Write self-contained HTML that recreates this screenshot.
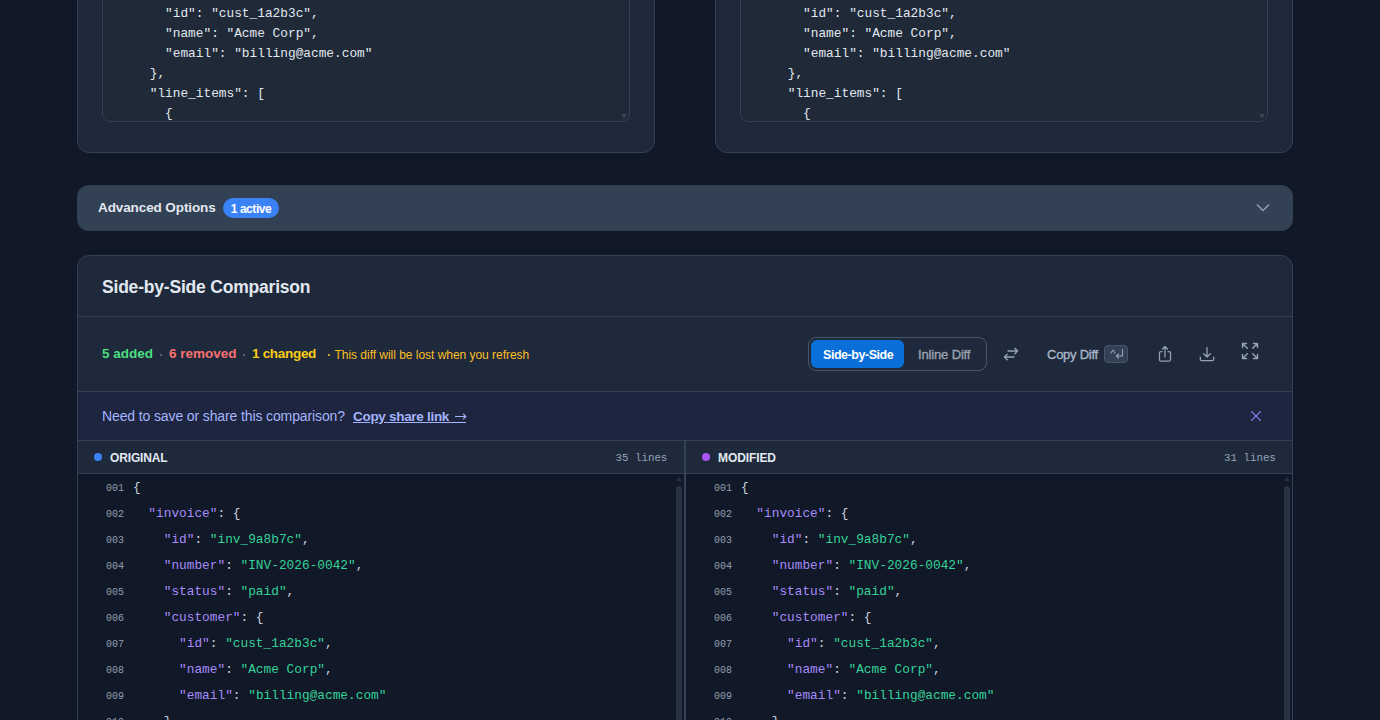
<!DOCTYPE html>
<html><head><meta charset="utf-8">
<style>
*{box-sizing:border-box;margin:0;padding:0}
html,body{width:1380px;height:720px;overflow:hidden;background:#111827;font-family:"Liberation Sans",sans-serif;color:#e2e8f0}
.abs{position:absolute;white-space:nowrap}
.mono{font-family:"Liberation Mono",monospace}
.card{position:absolute;background:#1e293b;border:1px solid #334155;border-radius:12px}
.ta{position:absolute;background:#1f2937;border:1px solid #334155;border-radius:8px;overflow:hidden}
.ta pre{position:absolute;left:16px;font-family:"Liberation Mono",monospace;font-size:12.8px;line-height:20px;color:#e2e8f0;white-space:pre}
.tri-down{position:absolute;width:0;height:0;border-left:3.5px solid transparent;border-right:3.5px solid transparent;border-top:5px solid #374252}
.row{position:absolute;height:26px;width:580px;white-space:pre;font-family:"Liberation Mono",monospace}
.ln{position:absolute;left:0;top:1.5px;font-size:10px;line-height:26px;color:#939fb1}
.cd{position:absolute;left:27px;top:0;font-size:12.8px;line-height:26px;color:#cbd5e1}
.k{color:#a78bfa}.s{color:#34d399}.p{color:#cbd5e1}
.sep{position:absolute;width:2px;height:2px;background:#64748b;border-radius:1px}
</style></head>
<body>
<div class="card" style="left:77px;top:-200px;width:578px;height:353px"></div>
<div class="card" style="left:715px;top:-200px;width:578px;height:353px"></div>
<div class="ta" style="left:102px;top:-180px;width:528px;height:302px">
<pre style="top:182.5px">      "id": "cust_1a2b3c",
      "name": "Acme Corp",
      "email": "billing@acme.com"
    },
    "line_items": [
      {</pre>
<div class="tri-down" style="left:518px;top:293px"></div>
</div>
<div class="ta" style="left:740px;top:-180px;width:528px;height:302px">
<pre style="top:182.5px">      "id": "cust_1a2b3c",
      "name": "Acme Corp",
      "email": "billing@acme.com"
    },
    "line_items": [
      {</pre>
<div class="tri-down" style="left:518px;top:293px"></div>
</div>

<div class="abs" style="left:77px;top:185px;width:1216px;height:46px;background:#334155;border-radius:12px"></div>
<div class="abs" id="adv" style="left:98px;font-size:13.5px;letter-spacing:-0.1px;top:199px;font-weight:700;color:#e2e8f0;line-height:18px">Advanced Options</div>
<div class="abs" style="left:223px;top:198px;width:56px;height:20px;border-radius:10px;background:#3b82f6;color:#fff;font-size:12px;letter-spacing:-0.45px;font-weight:700;line-height:20px;padding-top:1px;text-align:center"><span id="badge">1 active</span></div>
<svg class="abs" style="left:1254px;top:201px" width="18" height="14" viewBox="0 0 18 14"><path d="M3 3.5 L9 9.5 L15 3.5" fill="none" stroke="#94a3b8" stroke-width="1.3"/></svg>

<div class="card" style="left:77px;top:255px;width:1216px;height:600px"></div>
<div class="abs" style="left:78px;top:316px;width:1214px;height:1px;background:#334155"></div>
<div class="abs" id="title" style="left:102px;font-size:17.5px;letter-spacing:-0.2px;top:275.5px;font-weight:700;line-height:22px;color:#e2e8f0">Side-by-Side Comparison</div>

<div class="abs" id="s1" style="left:102px;font-size:13.5px;letter-spacing:0px;top:346px;line-height:16px;font-weight:700;color:#4ade80">5 added</div>
<div class="sep" style="left:160px;top:354px"></div>
<div class="abs" id="s2" style="left:169px;font-size:13.5px;letter-spacing:0px;top:346px;line-height:16px;font-weight:700;color:#f87171">6 removed</div>
<div class="sep" style="left:243px;top:354px"></div>
<div class="abs" id="s3" style="left:252px;font-size:13.5px;letter-spacing:-0.3px;top:346px;line-height:16px;font-weight:700;color:#facc15">1 changed</div>
<div class="sep" style="left:328px;top:354px;background:#fbbf24"></div>
<div class="abs" id="s4" style="left:334.5px;font-size:12px;letter-spacing:-0.03px;top:348px;line-height:15px;color:#fbbf24">This diff will be lost when you refresh</div>

<div class="abs" style="left:808px;top:337px;width:179px;height:34px;border:1px solid #475569;border-radius:8px"></div>
<div class="abs" style="left:811px;top:340px;width:93px;height:28px;border-radius:6px;background:#0b6fd9"></div>
<div class="abs" id="t1" style="left:823px;top:348px;font-size:12.5px;letter-spacing:-0.45px;font-weight:700;line-height:15px;color:#fff">Side-by-Side</div>
<div class="abs" id="t2" style="left:918px;top:347px;font-size:13px;letter-spacing:-0.15px;font-weight:400;line-height:15px;color:#9ca3af;-webkit-text-stroke:0.35px #9ca3af">Inline Diff</div>

<svg class="abs" style="left:1002px;top:345px" width="18" height="18" viewBox="0 0 18 18" fill="none" stroke="#94a3b8" stroke-width="1.3" stroke-linecap="round" stroke-linejoin="round"><path d="M6 6 H15.5 M12.8 3.2 L15.6 6 L12.8 8.8"/><path d="M12 12 H2.5 M5.2 9.2 L2.4 12 L5.2 14.8"/></svg>

<div class="abs" id="cd" style="left:1047px;top:347px;font-size:13px;letter-spacing:-0.25px;line-height:15px;color:#a9b6c8;-webkit-text-stroke:0.35px #a9b6c8">Copy Diff</div>
<div class="abs" style="left:1104px;top:345px;width:24px;height:18px;border:1px solid #475569;background:#334155;border-radius:4px;font-size:10px;line-height:14px;color:#94a3b8;text-align:center;"><svg style="position:absolute;left:4px;top:2px" width="16" height="12" viewBox="0 0 16 12" fill="none" stroke="#94a3b8" stroke-width="1.1" stroke-linecap="round" stroke-linejoin="round"><path d="M2 5 L4 2 L6 5"/><path d="M13.5 1.5 V8 H7.5 M9.5 6 L7.5 8 L9.5 10"/></svg></div>

<svg class="abs" style="left:1156px;top:344px" width="18" height="20" viewBox="0 0 18 20" fill="none" stroke="#94a3b8" stroke-width="1.25" stroke-linecap="round" stroke-linejoin="round"><path d="M6 7.5 H5 Q3.5 7.5 3.5 9 V15.7 Q3.5 17.2 5 17.2 H13 Q14.5 17.2 14.5 15.7 V9 Q14.5 7.5 13 7.5 H12"/><path d="M9 13 V2.5 M6.5 5 L9 2.5 L11.5 5"/></svg>
<svg class="abs" style="left:1198px;top:345px" width="18" height="18" viewBox="0 0 18 18" fill="none" stroke="#94a3b8" stroke-width="1.25" stroke-linecap="round" stroke-linejoin="round"><path d="M2.3 12 V14.3 Q2.3 15.7 3.7 15.7 H14.3 Q15.7 15.7 15.7 14.3 V12"/><path d="M9 2.3 V12 M5.7 8.7 L9 12 L12.3 8.7"/></svg>
<svg class="abs" style="left:1241px;top:342px" width="18" height="18" viewBox="1 1 18 18" fill="none" stroke="#94a3b8" stroke-width="1.4" stroke-linecap="round" stroke-linejoin="round"><path d="M2.5 6.5 V2.5 H6.5 M2.5 2.5 L7.3 7.3"/><path d="M17.5 6.5 V2.5 H13.5 M17.5 2.5 L12.7 7.3"/><path d="M2.5 13.5 V17.5 H6.5 M2.5 17.5 L7.3 12.7"/><path d="M17.5 13.5 V17.5 H13.5 M17.5 17.5 L12.7 12.7"/></svg>

<div class="abs" style="left:78px;top:391px;width:1214px;height:1px;background:#334155"></div>
<div class="abs" style="left:78px;top:392px;width:1214px;height:48px;background:#1e253f"></div>
<div class="abs" style="left:78px;top:440px;width:1214px;height:1px;background:#334155"></div>
<div class="abs" id="b1" style="left:102px;top:408px;font-size:14px;letter-spacing:-0.12px;line-height:17px;color:#a5b4fc">Need to save or share this comparison?</div>
<div class="abs" id="b2" style="left:353px;top:408px;font-size:13.5px;letter-spacing:-0.3px;line-height:17px;font-weight:700;color:#a5b4fc;text-decoration:underline">Copy share link</div>
<svg class="abs" style="left:454px;top:412px" width="13" height="10" viewBox="0 0 13 10" fill="none" stroke="#a5b4fc" stroke-width="1.1" stroke-linecap="round" stroke-linejoin="round"><path d="M1.5 4.5 H11.8 M9.4 2.1 L11.8 4.5 L9.4 6.9"/></svg>
<div class="abs" style="left:449px;top:422px;width:17px;height:1px;background:#a5b4fc"></div>
<svg class="abs" style="left:1249px;top:409px" width="14" height="14" viewBox="0 0 14 14" fill="none" stroke="#7f86f5" stroke-width="1.2" stroke-linecap="round"><path d="M2.6 2.6 L11.4 11.4 M11.4 2.6 L2.6 11.4"/></svg>

<div class="abs" style="left:78px;top:441px;width:1214px;height:32px;background:#1e293b"></div>
<div class="abs" style="left:78px;top:473px;width:1214px;height:1px;background:#334155"></div>
<div class="abs" style="left:684px;top:441px;width:2px;height:300px;background:#334155"></div>
<div class="abs" style="left:78px;top:474px;width:606px;height:260px;background:#111827"></div>
<div class="abs" style="left:686px;top:474px;width:606px;height:260px;background:#111827"></div>

<div class="abs" style="left:94px;top:453px;width:8px;height:8px;border-radius:50%;background:#3b82f6"></div>
<div class="abs" id="h1" style="left:110px;top:450.7px;font-size:12px;letter-spacing:-0.15px;font-weight:700;line-height:14px;color:#e2e8f0">ORIGINAL</div>
<div class="abs mono" id="h2" style="left:615.5px;top:451px;font-size:10.8px;line-height:14px;color:#94a3b8">35 lines</div>
<div class="abs" style="left:702px;top:453px;width:8px;height:8px;border-radius:50%;background:#a855f7"></div>
<div class="abs" id="h3" style="left:718px;top:450.7px;font-size:12px;letter-spacing:-0.1px;font-weight:700;line-height:14px;color:#e2e8f0">MODIFIED</div>
<div class="abs mono" id="h4" style="left:1224px;top:451px;font-size:10.8px;line-height:14px;color:#94a3b8">31 lines</div>

<div class="row" style="left:106px;top:474.50px"><span class="ln">001</span><span class="cd"><span class="p">{</span></span></div>
<div class="row" style="left:106px;top:500.50px"><span class="ln">002</span><span class="cd">  <span class="k">"invoice"</span><span class="p">: {</span></span></div>
<div class="row" style="left:106px;top:526.50px"><span class="ln">003</span><span class="cd">    <span class="k">"id"</span><span class="p">: </span><span class="s">"inv_9a8b7c"</span><span class="p">,</span></span></div>
<div class="row" style="left:106px;top:552.50px"><span class="ln">004</span><span class="cd">    <span class="k">"number"</span><span class="p">: </span><span class="s">"INV-2026-0042"</span><span class="p">,</span></span></div>
<div class="row" style="left:106px;top:578.50px"><span class="ln">005</span><span class="cd">    <span class="k">"status"</span><span class="p">: </span><span class="s">"paid"</span><span class="p">,</span></span></div>
<div class="row" style="left:106px;top:604.50px"><span class="ln">006</span><span class="cd">    <span class="k">"customer"</span><span class="p">: {</span></span></div>
<div class="row" style="left:106px;top:630.50px"><span class="ln">007</span><span class="cd">      <span class="k">"id"</span><span class="p">: </span><span class="s">"cust_1a2b3c"</span><span class="p">,</span></span></div>
<div class="row" style="left:106px;top:656.50px"><span class="ln">008</span><span class="cd">      <span class="k">"name"</span><span class="p">: </span><span class="s">"Acme Corp"</span><span class="p">,</span></span></div>
<div class="row" style="left:106px;top:682.50px"><span class="ln">009</span><span class="cd">      <span class="k">"email"</span><span class="p">: </span><span class="s">"billing@acme.com"</span></span></div>
<div class="row" style="left:106px;top:708.50px"><span class="ln">010</span><span class="cd">    <span class="p">},</span></span></div>
<div class="row" style="left:714px;top:474.50px"><span class="ln">001</span><span class="cd"><span class="p">{</span></span></div>
<div class="row" style="left:714px;top:500.50px"><span class="ln">002</span><span class="cd">  <span class="k">"invoice"</span><span class="p">: {</span></span></div>
<div class="row" style="left:714px;top:526.50px"><span class="ln">003</span><span class="cd">    <span class="k">"id"</span><span class="p">: </span><span class="s">"inv_9a8b7c"</span><span class="p">,</span></span></div>
<div class="row" style="left:714px;top:552.50px"><span class="ln">004</span><span class="cd">    <span class="k">"number"</span><span class="p">: </span><span class="s">"INV-2026-0042"</span><span class="p">,</span></span></div>
<div class="row" style="left:714px;top:578.50px"><span class="ln">005</span><span class="cd">    <span class="k">"status"</span><span class="p">: </span><span class="s">"paid"</span><span class="p">,</span></span></div>
<div class="row" style="left:714px;top:604.50px"><span class="ln">006</span><span class="cd">    <span class="k">"customer"</span><span class="p">: {</span></span></div>
<div class="row" style="left:714px;top:630.50px"><span class="ln">007</span><span class="cd">      <span class="k">"id"</span><span class="p">: </span><span class="s">"cust_1a2b3c"</span><span class="p">,</span></span></div>
<div class="row" style="left:714px;top:656.50px"><span class="ln">008</span><span class="cd">      <span class="k">"name"</span><span class="p">: </span><span class="s">"Acme Corp"</span><span class="p">,</span></span></div>
<div class="row" style="left:714px;top:682.50px"><span class="ln">009</span><span class="cd">      <span class="k">"email"</span><span class="p">: </span><span class="s">"billing@acme.com"</span></span></div>
<div class="row" style="left:714px;top:708.50px"><span class="ln">010</span><span class="cd">    <span class="p">},</span></span></div>
<div class="abs" style="left:676px;top:486px;width:6px;height:260px;border-radius:3px;background:#283242"></div>
<div class="abs" style="left:676px;top:477px;width:0;height:0;border-left:3px solid transparent;border-right:3px solid transparent;border-bottom:4px solid #283242"></div>
<div class="abs" style="left:1284px;top:486px;width:6px;height:260px;border-radius:3px;background:#283242"></div>
<div class="abs" style="left:1284px;top:477px;width:0;height:0;border-left:3px solid transparent;border-right:3px solid transparent;border-bottom:4px solid #283242"></div>
</body></html>
